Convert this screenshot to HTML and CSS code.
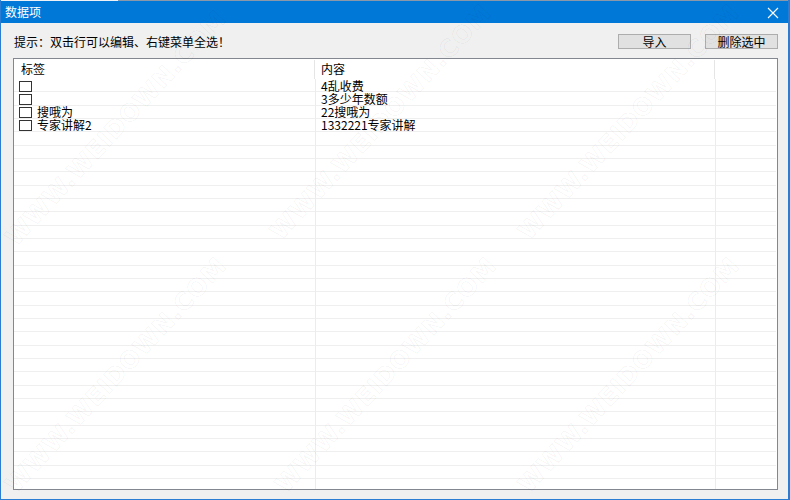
FILE: index.html
```html
<!DOCTYPE html>
<html lang="zh">
<head>
<meta charset="utf-8">
<title>数据项</title>
<link rel="stylesheet" href="styles.css">
</head>
<body>
<div class="window">
  <div class="topstrip"><span class="strip-light"></span><span class="strip-dark"></span></div>
  <div class="titlebar">
    <span class="title">数据项</span>
    <svg class="close" width="12" height="12" viewBox="0 0 12 12"><path d="M1 1 L11 11 M11 1 L1 11" stroke="#fff" stroke-width="1.1" fill="none"/></svg>
  </div>
  <div class="content">
    <div class="toolbar">
      <span class="hint">提示：双击行可以编辑、右键菜单全选！</span>
      <div class="buttons">
        <button class="btn btn-import">导入</button>
        <button class="btn btn-delete">删除选中</button>
      </div>
    </div>
    <div class="listbox">
      <div class="header">
        <div class="hcell hcol1">标签</div>
        <div class="hcell hcol2">内容</div>
        <div class="hcell hcol3"></div>
      </div>
      <div class="body">
        <div class="colline col-a"></div>
        <div class="colline col-b"></div>
        <div class="rows">
          <div class="row"><div class="cell c1"><span class="chk"></span></div><div class="cell c2">4乱收费</div></div>
          <div class="row"><div class="cell c1"><span class="chk"></span></div><div class="cell c2">3多少年数额</div></div>
          <div class="row"><div class="cell c1"><span class="chk"></span><span class="lbl">搜哦为</span></div><div class="cell c2">22搜哦为</div></div>
          <div class="row"><div class="cell c1"><span class="chk"></span><span class="lbl">专家讲解2</span></div><div class="cell c2">1332221专家讲解</div></div>
        </div>
      </div>
    </div>
  </div>
  <div class="watermarks">
    <span class="wm wm1">WWW.WEIDOWN.COM</span>
    <span class="wm wm2">WWW.WEIDOWN.COM</span>
    <span class="wm wm3">WWW.WEIDOWN.COM</span>
    <span class="wm wm4">WWW.WEIDOWN.COM</span>
    <span class="wm wm5">WWW.WEIDOWN.COM</span>
    <span class="wm wm6">WWW.WEIDOWN.COM</span>
  </div>
</div>
</body>
</html>
```

FILE: styles.css
```css
html, body {
  margin: 0;
  padding: 0;
  background: #f0f0f0;
}
body {
  font-family: "Noto Sans CJK SC", "Noto Sans", sans-serif;
  font-size: 12px;
  color: #000;
}
.window {
  position: relative;
  width: 790px;
  height: 500px;
  box-sizing: border-box;
  background: #f0f0f0;
  border-left: 1px solid #2b7cd3;
  border-right: 2px solid #2b7cd3;
  border-bottom: 1px solid #2b7cd3;
  display: flex;
  flex-direction: column;
  overflow: hidden;
}
.topstrip {
  height: 1px;
  display: flex;
  margin-left: -1px;
  margin-right: -2px;
}
.strip-light {
  width: 118px;
  background: #eef2f7;
}
.strip-dark {
  flex: 1;
  background: #8a98aa;
}
.titlebar {
  height: 22px;
  background: #0078d7;
  margin-left: -1px;
  margin-right: -2px;
  display: flex;
  align-items: center;
  justify-content: space-between;
  padding: 0 11px 0 5px;
  color: #fff;
}
.title {
  font-size: 12px;
  line-height: 22px;
}
.close {
  display: block;
  margin-top: 1px;
}
.content {
  flex: 1;
  display: flex;
  flex-direction: column;
  padding: 10px 0 0 12px;
}
.toolbar {
  height: 16px;
  display: flex;
  align-items: center;
  justify-content: space-between;
  width: 765px;
}
.hint {
  line-height: 15px;
  padding-left: 1px;
}
.buttons {
  display: flex;
  gap: 14px;
  padding-top: 1px;
}
.btn {
  font-family: inherit;
  font-size: 12px;
  height: 15px;
  padding: 0;
  margin: 0;
  line-height: 13px;
  background: #e1e1e1;
  border: 1px solid #adadad;
  color: #000;
  box-sizing: border-box;
}
.btn-import { width: 73px; }
.btn-delete { width: 73px; }
.listbox {
  margin-top: 9px;
  width: 765px;
  height: 432px;
  box-sizing: border-box;
  border: 1px solid #828790;
  background: #fff;
  display: flex;
  flex-direction: column;
  overflow: hidden;
}
.header {
  height: 20px;
  display: flex;
  flex-shrink: 0;
}
.hcell {
  box-sizing: border-box;
  line-height: 17px;
  height: 19px;
  margin-top: 1px;
}
.hcol1 {
  width: 301px;
  padding-left: 7px;
  border-right: 1px solid #e5e5e5;
}
.hcol2 {
  width: 400px;
  padding-left: 6px;
  border-right: 1px solid #e5e5e5;
}
.hcol3 {
  flex: 1;
}
.body {
  position: relative;
  flex: 1;
  margin-right: 1px;
  background-image: repeating-linear-gradient(to bottom, transparent 0, transparent 12.33px, #efefef 12.33px, #efefef 13.33px);
}
.colline {
  position: absolute;
  top: 0;
  bottom: 0;
  width: 1px;
  background: #ececec;
}
.col-a { left: 301px; }
.col-b { left: 701px; }
.rows {
  display: flex;
  flex-direction: column;
}
.row {
  height: 13.33px;
  display: flex;
}
.cell {
  display: flex;
  align-items: center;
  height: 13px;
  line-height: 12px;
  white-space: nowrap;
}
.c1 {
  width: 302px;
  padding-left: 5px;
  box-sizing: border-box;
}
.c2 {
  width: 400px;
  padding-left: 5px;
  box-sizing: border-box;
}
.chk {
  display: inline-block;
  width: 13px;
  height: 11px;
  box-sizing: border-box;
  border: 1px solid #333;
  background: #fff;
  margin-top: 1px;
}
.lbl {
  margin-left: 5px;
}
.watermarks {
  position: absolute;
  inset: 0;
  pointer-events: none;
}
.wm {
  position: absolute;
  display: inline-block;
  transform: translate(-50%, -50%) rotate(-47deg);
  font-family: "DejaVu Sans", sans-serif;
  font-weight: bold;
  font-size: 24px;
  line-height: 28px;
  letter-spacing: 1px;
  color: transparent;
  -webkit-text-stroke: 1px rgba(0, 0, 0, 0.045);
  white-space: nowrap;
}
.wm1 { left: 115px; top: 128px; }
.wm2 { left: 380px; top: 122px; }
.wm3 { left: 628px; top: 122px; }
.wm4 { left: 115px; top: 375px; }
.wm5 { left: 385px; top: 375px; }
.wm6 { left: 628px; top: 375px; }
```
